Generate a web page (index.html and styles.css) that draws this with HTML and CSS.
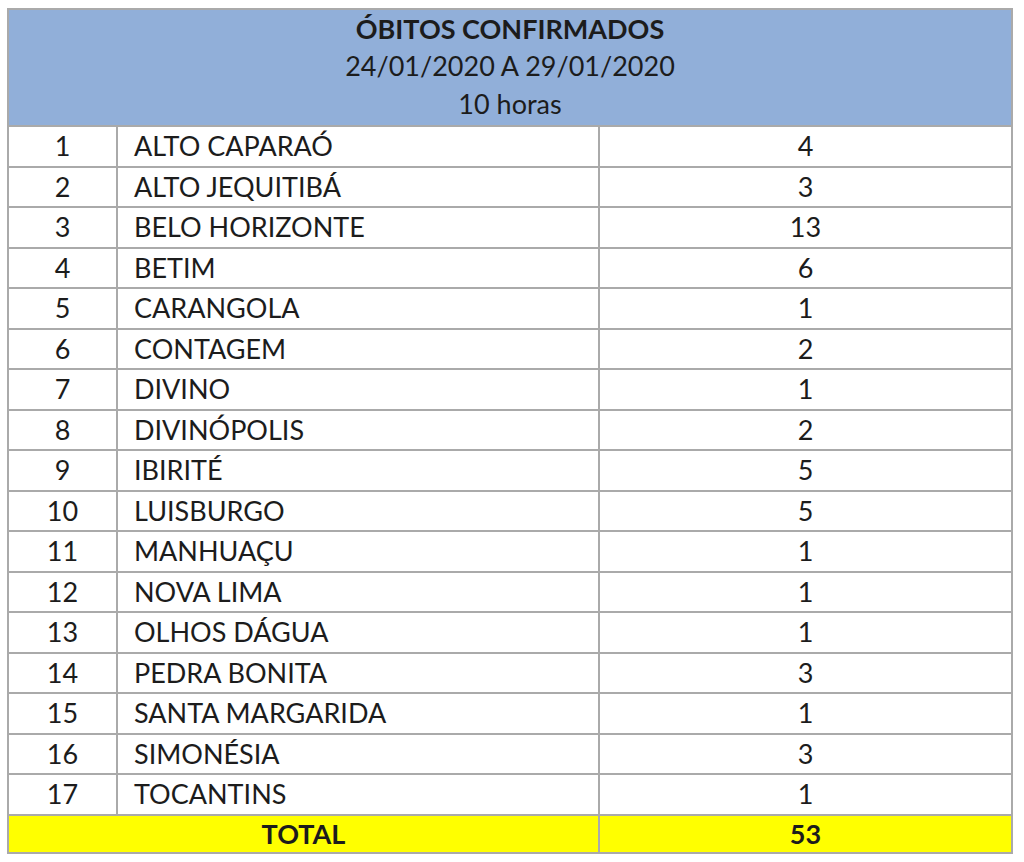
FILE: index.html
```html
<!DOCTYPE html>
<html lang="pt">
<head>
<meta charset="utf-8">
<link rel="stylesheet" href="styles.css">
</head>
<body>
<table class="sheet">
  <colgroup>
    <col class="c-num">
    <col class="c-name">
    <col class="c-val">
  </colgroup>
  <thead>
    <tr>
      <th colspan="3" class="head">
        <div class="title">ÓBITOS CONFIRMADOS</div>
        <div class="sub">24/01/2020 A 29/01/2020</div>
        <div class="sub">10 horas</div>
      </th>
    </tr>
  </thead>
  <tbody>
    <tr><td class="num">1</td><td class="name">ALTO CAPARAÓ</td><td class="val">4</td></tr>
    <tr><td class="num">2</td><td class="name">ALTO JEQUITIBÁ</td><td class="val">3</td></tr>
    <tr><td class="num">3</td><td class="name">BELO HORIZONTE</td><td class="val">13</td></tr>
    <tr><td class="num">4</td><td class="name">BETIM</td><td class="val">6</td></tr>
    <tr><td class="num">5</td><td class="name">CARANGOLA</td><td class="val">1</td></tr>
    <tr><td class="num">6</td><td class="name">CONTAGEM</td><td class="val">2</td></tr>
    <tr><td class="num">7</td><td class="name">DIVINO</td><td class="val">1</td></tr>
    <tr><td class="num">8</td><td class="name">DIVINÓPOLIS</td><td class="val">2</td></tr>
    <tr><td class="num">9</td><td class="name">IBIRITÉ</td><td class="val">5</td></tr>
    <tr><td class="num">10</td><td class="name">LUISBURGO</td><td class="val">5</td></tr>
    <tr><td class="num">11</td><td class="name">MANHUAÇU</td><td class="val">1</td></tr>
    <tr><td class="num">12</td><td class="name">NOVA LIMA</td><td class="val">1</td></tr>
    <tr><td class="num">13</td><td class="name">OLHOS DÁGUA</td><td class="val">1</td></tr>
    <tr><td class="num">14</td><td class="name">PEDRA BONITA</td><td class="val">3</td></tr>
    <tr><td class="num">15</td><td class="name">SANTA MARGARIDA</td><td class="val">1</td></tr>
    <tr><td class="num">16</td><td class="name">SIMONÉSIA</td><td class="val">3</td></tr>
    <tr><td class="num">17</td><td class="name">TOCANTINS</td><td class="val">1</td></tr>
  </tbody>
  <tfoot>
    <tr class="total"><td colspan="2">TOTAL</td><td>53</td></tr>
  </tfoot>
</table>
</body>
</html>
```
FILE: styles.css
```css
html, body {
  margin: 0;
  padding: 0;
  background: #ffffff;
}
body {
  padding: 8px 0 0 7px;
  font-family: Lato, "Open Sans", sans-serif;
  color: #1c1c1c;
}
.sheet {
  border-collapse: collapse;
  width: 1006px;
  table-layout: fixed;
  font-size: 27px;
}
.c-num { width: 109px; }
.c-name { width: 482px; }
.sheet td, .sheet th {
  border: 2px solid #aaaaaa;
  padding: 0;
}
.head {
  background: #91afd9;
  height: 114px;
  font-weight: normal;
  font-size: 27px;
  text-align: center;
  vertical-align: top;
}
.sheet .head {
  padding-top: 1px;
}
.title {
  font-weight: bold;
  line-height: 36px;
}
.sub {
  line-height: 38px;
}
.sheet tbody td {
  height: 38.5px;
  line-height: 38px;
}
.num {
  text-align: center;
}
.sheet .name {
  text-align: left;
  padding-left: 16px;
}
.val {
  text-align: center;
}
.total td {
  background: #ffff00;
  height: 36px;
  font-weight: bold;
  text-align: center;
}
```
